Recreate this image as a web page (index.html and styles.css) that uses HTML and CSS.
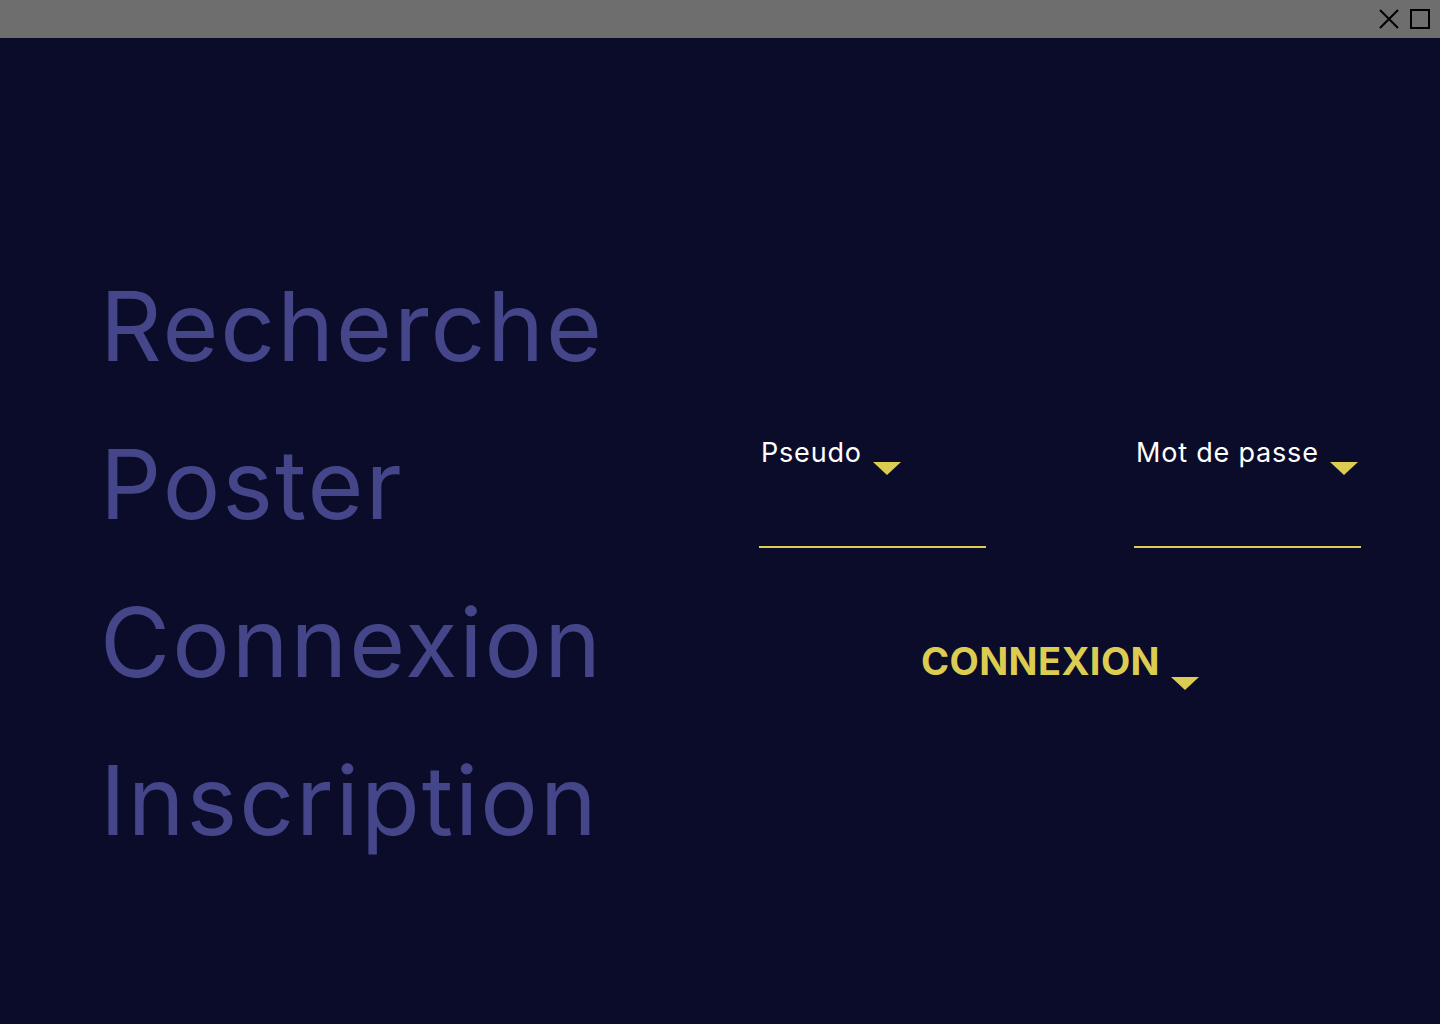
FILE: index.html
```html
<!DOCTYPE html>
<html lang="fr">
<head>
<meta charset="utf-8">
<title>Connexion</title>
<link rel="stylesheet" href="styles.css">
</head>
<body>
<div class="titlebar">
  <svg class="win-icon" width="20" height="20" viewBox="0 0 20 20"><path d="M1 1 L19 19 M19 1 L1 19" stroke="#000" stroke-width="2" fill="none"/></svg>
  <svg class="win-icon" width="20" height="20" viewBox="0 0 20 20"><rect x="1" y="1" width="18" height="18" stroke="#000" stroke-width="2" fill="none"/></svg>
</div>
<main class="page">
  <nav class="menu">
    <a class="menu-item" href="#">Recherche</a>
    <a class="menu-item" href="#">Poster</a>
    <a class="menu-item" href="#">Connexion</a>
    <a class="menu-item" href="#">Inscription</a>
  </nav>
  <form class="login">
    <div class="fields">
      <label class="field">
        <span class="field-label">Pseudo <span class="tri"></span></span>
        <span class="field-line"></span>
      </label>
      <label class="field">
        <span class="field-label">Mot de passe <span class="tri"></span></span>
        <span class="field-line"></span>
      </label>
    </div>
    <div class="submit-row">
      <span class="submit">CONNEXION <span class="tri"></span></span>
    </div>
  </form>
</main>
</body>
</html>
```
FILE: styles.css
```css
* { box-sizing: border-box; }
html, body { margin: 0; padding: 0; }
body {
  background: #0b0c2a;
  font-family: Inter, "Liberation Sans", sans-serif;
  height: 1024px;
  overflow: hidden;
}
.titlebar {
  height: 38px;
  background: #6e6e6e;
  display: flex;
  justify-content: flex-end;
  align-items: center;
  gap: 11px;
  padding-right: 10px;
}
.win-icon { display: block; }
.page {
  display: flex;
  height: 986px;
}
.menu {
  width: 759px;
  padding-left: 100px;
  padding-top: 209px;
  display: flex;
  flex-direction: column;
}
.menu-item {
  color: #45468a;
  text-decoration: none;
  font-size: 96px;
  font-weight: 400;
  line-height: 158px;
  letter-spacing: 2px;
}
.login {
  width: 602px;
  padding-top: 395px;
  display: flex;
  flex-direction: column;
}
.fields {
  display: flex;
  justify-content: space-between;
}
.field {
  width: 227px;
  display: flex;
  flex-direction: column;
}
.field-label {
  color: #ffffff;
  font-size: 27px;
  line-height: 40px;
  padding-left: 2px;
  letter-spacing: 0.8px;
  display: flex;
  align-items: flex-end;
  gap: 11px;
}
.field-label .tri { margin-bottom: -2px; }
.field-line {
  height: 2px;
  background: #dccd52;
  margin-top: 73px;
}
.tri {
  display: inline-block;
  width: 0; height: 0;
  border-left: 14px solid transparent;
  border-right: 14px solid transparent;
  border-top: 13px solid #dccd52;
}
.submit-row {
  display: flex;
  justify-content: center;
  padding-top: 90px;
  padding-left: 0;
}
.submit {
  color: #dccd52;
  font-weight: 700;
  font-size: 38px;
  letter-spacing: 0.4px;
  line-height: 46px;
  display: flex;
  align-items: flex-end;
  gap: 11px;
}
.submit .tri { margin-bottom: -6px; }
```
